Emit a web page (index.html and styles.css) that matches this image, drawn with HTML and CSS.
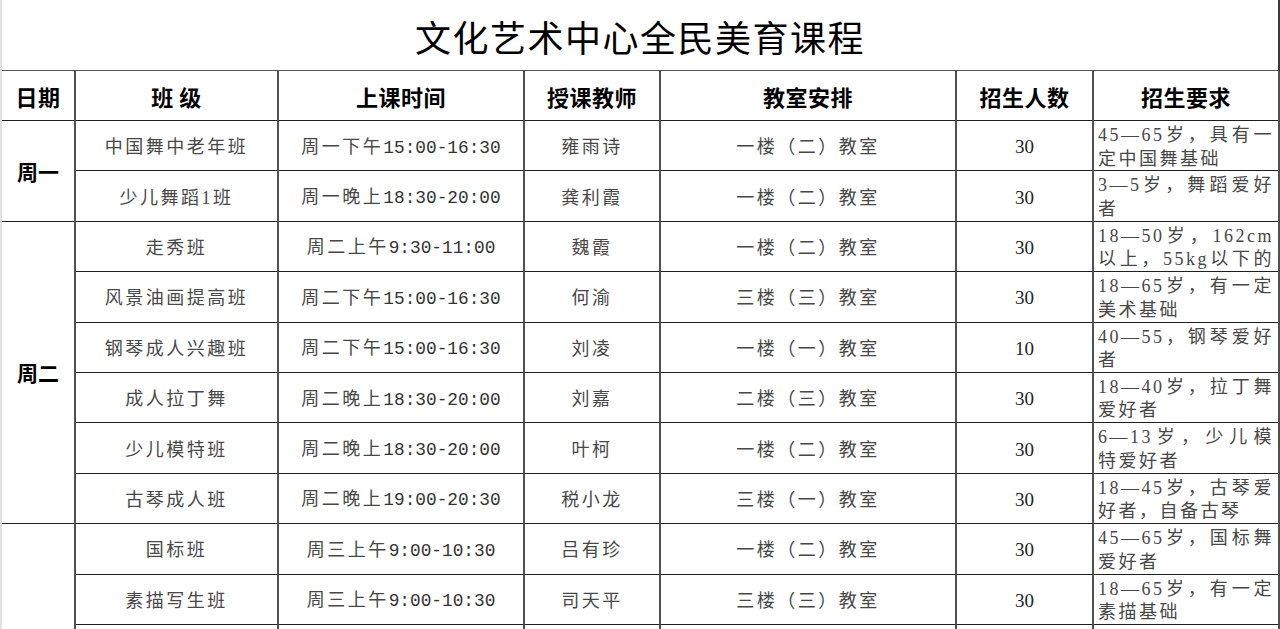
FILE: index.html
```html
<!DOCTYPE html>
<html lang="zh-CN">
<head>
<meta charset="utf-8">
<title>文化艺术中心全民美育课程</title>
<link rel="stylesheet" href="styles.css">
</head>
<body>
<table class="sheet">
  <colgroup>
    <col class="w-day"><col class="w-class"><col class="w-time"><col class="w-teacher"><col class="w-room"><col class="w-num"><col class="w-req">
  </colgroup>
  <tr class="title"><td colspan="7">文化艺术中心全民美育课程</td></tr>
  <tr class="head">
    <th class="first">日期</th><th>班 级</th><th>上课时间</th><th>授课教师</th><th>教室安排</th><th>招生人数</th><th>招生要求</th>
  </tr>
  <tr class="row">
    <td class="day" rowspan="2">周一</td>
    <td class="c">中国舞中老年班</td><td class="c">周一下午<span class="hm">15:00-16:30</span></td><td class="c">雍雨诗</td><td class="c">一楼（二）教室</td><td class="num">30</td>
    <td class="req"><div class="clip">45—65岁，具有一定中国舞基础</div></td>
  </tr>
  <tr class="row">
    <td class="c">少儿舞蹈1班</td><td class="c">周一晚上<span class="hm">18:30-20:00</span></td><td class="c">龚利霞</td><td class="c">一楼（二）教室</td><td class="num">30</td>
    <td class="req"><div class="clip">3—5岁，舞蹈爱好者</div></td>
  </tr>
  <tr class="row">
    <td class="day" rowspan="6">周二</td>
    <td class="c">走秀班</td><td class="c">周二上午<span class="hm">9:30-11:00</span></td><td class="c">魏霞</td><td class="c">一楼（二）教室</td><td class="num">30</td>
    <td class="req"><div class="clip full">18—50岁，162cm以上，55kg以下的</div></td>
  </tr>
  <tr class="row">
    <td class="c">风景油画提高班</td><td class="c">周二下午<span class="hm">15:00-16:30</span></td><td class="c">何渝</td><td class="c">三楼（三）教室</td><td class="num">30</td>
    <td class="req"><div class="clip">18—65岁，有一定美术基础</div></td>
  </tr>
  <tr class="row">
    <td class="c">钢琴成人兴趣班</td><td class="c">周二下午<span class="hm">15:00-16:30</span></td><td class="c">刘凌</td><td class="c">一楼（一）教室</td><td class="num">10</td>
    <td class="req"><div class="clip">40—55，钢琴爱好者</div></td>
  </tr>
  <tr class="row">
    <td class="c">成人拉丁舞</td><td class="c">周二晚上<span class="hm">18:30-20:00</span></td><td class="c">刘嘉</td><td class="c">二楼（三）教室</td><td class="num">30</td>
    <td class="req"><div class="clip">18—40岁，拉丁舞爱好者</div></td>
  </tr>
  <tr class="row">
    <td class="c">少儿模特班</td><td class="c">周二晚上<span class="hm">18:30-20:00</span></td><td class="c">叶柯</td><td class="c">一楼（二）教室</td><td class="num">30</td>
    <td class="req"><div class="clip">6—13岁，少儿模特爱好者</div></td>
  </tr>
  <tr class="row">
    <td class="c">古琴成人班</td><td class="c">周二晚上<span class="hm">19:00-20:30</span></td><td class="c">税小龙</td><td class="c">三楼（一）教室</td><td class="num">30</td>
    <td class="req"><div class="clip">18—45岁，古琴爱好者，自备古琴</div></td>
  </tr>
  <tr class="row">
    <td class="day" rowspan="3"></td>
    <td class="c">国标班</td><td class="c">周三上午<span class="hm">9:00-10:30</span></td><td class="c">吕有珍</td><td class="c">一楼（二）教室</td><td class="num">30</td>
    <td class="req"><div class="clip">45—65岁，国标舞爱好者</div></td>
  </tr>
  <tr class="row">
    <td class="c">素描写生班</td><td class="c">周三上午<span class="hm">9:00-10:30</span></td><td class="c">司天平</td><td class="c">三楼（三）教室</td><td class="num">30</td>
    <td class="req"><div class="clip">18—65岁，有一定素描基础</div></td>
  </tr>
  <tr class="row">
    <td class="c"></td><td class="c"></td><td class="c"></td><td class="c"></td><td class="num"></td><td class="req"></td>
  </tr>
</table>
</body>
</html>
```
FILE: styles.css
```css
html, body {
  margin: 0;
  padding: 0;
  background: #ffffff;
}

body {
  font-family: "Liberation Serif", "Noto Sans CJK SC", serif;
  color: #333333;
}

.sheet {
  border-collapse: collapse;
  table-layout: fixed;
  width: 1278px;
}

.w-day { width: 74px; }
.w-class { width: 203px; }
.w-time { width: 246px; }
.w-teacher { width: 136px; }
.w-room { width: 296px; }
.w-num { width: 137px; }
.w-req { width: 186px; }

.sheet td,
.sheet th {
  border-top: 1px solid #1e1e1e;
  border-bottom: 1px solid #1e1e1e;
  border-left: 2px solid #505050;
  border-right: 2px solid #505050;
  padding: 0;
  text-align: center;
  vertical-align: middle;
  overflow: hidden;
  white-space: nowrap;
}

.title td {
  height: 68px;
  border-top: none;
  border-left: 2px solid #e2e2e2;
  border-right: 2px solid #3a3a3a;
  border-bottom: 1px solid #555555;
  padding-top: 2px;
  font-family: "Noto Sans CJK SC", sans-serif;
  font-size: 36px;
  font-weight: 400;
  line-height: 44px;
  letter-spacing: 1.5px;
  color: #000000;
}

.head th {
  height: 49px;
  font-family: "Noto Sans CJK SC", sans-serif;
  font-weight: 700;
  font-size: 22px;
  line-height: 30px;
  letter-spacing: 0.5px;
  color: #000000;
}

.head th.first,
.sheet td.day {
  border-left: 2px solid #e2e2e2;
}

.sheet td.day {
  font-family: "Noto Sans CJK SC", sans-serif;
  font-weight: 700;
  font-size: 21px;
  color: #000000;
}

.row {
  height: 50.4px;
}

.sheet td.c {
  font-size: 18px;
  line-height: 24px;
  letter-spacing: 2.5px;
  padding-top: 3px;
  color: #484848;
}

.hm {
  font-family: "Liberation Mono", monospace;
  letter-spacing: 0;
  font-size: 17.8px;
  color: #333333;
}

.sheet td.num {
  font-size: 19px;
  line-height: 24px;
  padding-top: 3px;
  color: #222222;
}

.sheet td.req {
  vertical-align: top;
  text-align: justify;
  white-space: normal;
  padding: 3px 4px 0 4px;
  font-size: 18px;
  letter-spacing: 2.5px;
  color: #484848;
}

.clip {
  height: 46px;
  line-height: 23.5px;
  overflow: hidden;
}

.clip.full {
  text-align-last: justify;
}
```
